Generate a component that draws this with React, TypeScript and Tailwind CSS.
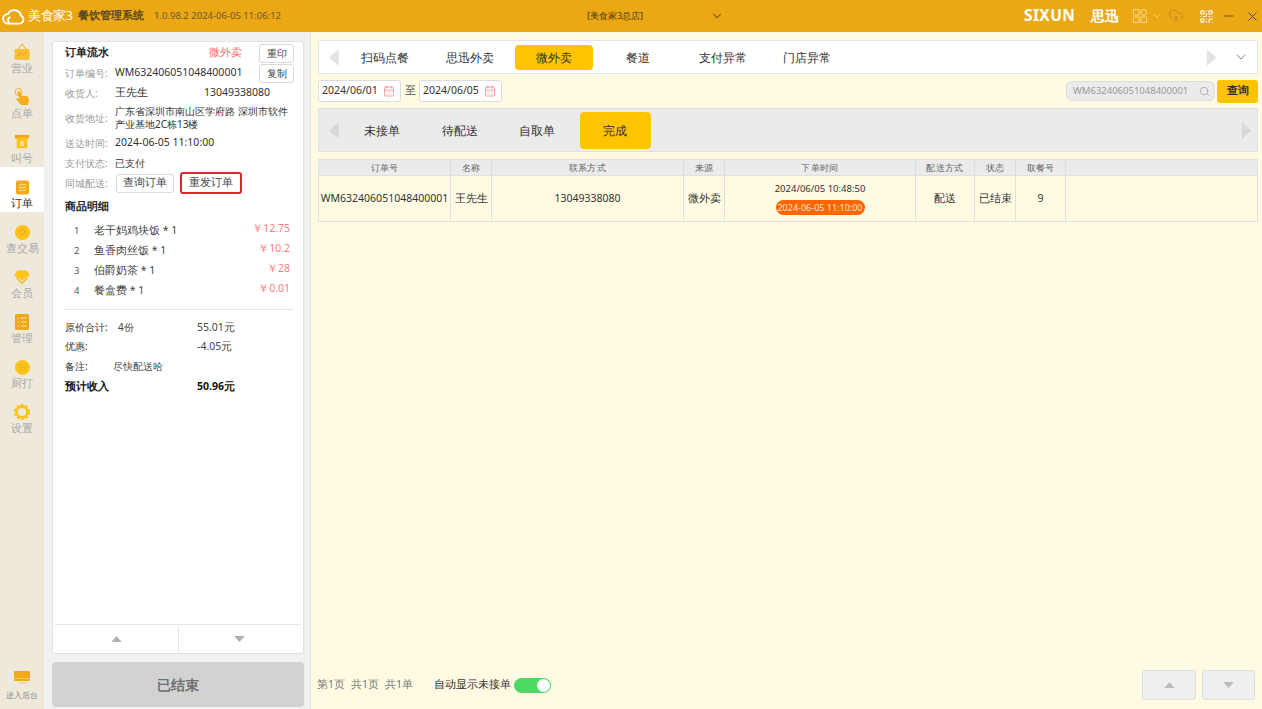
import React from "react";
import { ChevronDown, CloudUpload, QrCode, Minus, X, Search, CalendarDays } from "lucide-react";

const Tri = ({ dir, className }: { dir: "l" | "r" | "u" | "d"; className: string }) => {
  const p = { l: "10,0 10,18 0,9", r: "0,0 0,18 10,9", u: "0,8 14,8 7,0", d: "0,0 14,0 7,8" }[dir];
  const vb = dir === "l" || dir === "r" ? "0 0 10 18" : "0 0 14 8";
  return (
    <svg viewBox={vb} className={className} fill="currentColor">
      <polygon points={p} />
    </svg>
  );
};

const IconYingye = () => (
  <svg viewBox="0 0 16 18" className="w-[16px] h-[18px]">
    <path d="M8 1 L4 6 M8 1 L12 6" stroke="#f0a818" strokeWidth="1" fill="none" />
    <rect x="0.5" y="6" width="15" height="11" rx="1.5" fill="#fbc02d" />
    <path d="M3 13 L6 10 L9 12 L13 9" stroke="#ee9f10" strokeWidth="1" fill="none" />
  </svg>
);
const IconDian = () => (
  <svg viewBox="0 0 16 18" className="w-[16px] h-[18px]">
    <circle cx="4.5" cy="4" r="3.5" fill="none" stroke="#f5b32a" strokeWidth="1" />
    <path d="M3 4 L6 3 L8 8 L13 8 Q15 9 15 12 L14 17 L7 17 L2 11 L4 10 L5.5 11 Z" fill="#f5ad1c" />
  </svg>
);
const IconJiao = () => (
  <svg viewBox="0 0 16 18" className="w-[16px] h-[16px]">
    <rect x="0" y="1" width="16" height="4" fill="#f0a818" />
    <rect x="2" y="4" width="12" height="12" rx="1.5" fill="#fcc419" />
    <text x="8" y="14" textAnchor="middle" fontSize="9" fill="#fff" fontFamily="Liberation Sans, sans-serif">8</text>
  </svg>
);
const IconOrder = () => (
  <svg viewBox="0 0 14 15" className="w-[13px] h-[15px]">
    <rect width="14" height="15" rx="2" fill="#f2a91c" />
    <path d="M3 4.5H11M3 7.5H11M3 10.5H11" stroke="#ffe6a8" strokeWidth="1" />
  </svg>
);
const IconCha = () => (
  <svg viewBox="0 0 16 16" className="w-[15px] h-[15px]">
    <circle cx="8" cy="8" r="8" fill="#fcc419" />
    <circle cx="7.6" cy="7.6" r="3" fill="none" stroke="#f2a91c" strokeWidth="1" />
    <path d="M10 10 L11.5 11.5" stroke="#f2a91c" strokeWidth="1" />
  </svg>
);
const IconHui = () => (
  <svg viewBox="0 0 16 15" className="w-[16px] h-[15px]">
    <path d="M3.5 0.5H12.5L16 5 L8 10.5 L0 5 Z" fill="#fcc419" />
    <path d="M1.5 8 L8 14.5 L14.5 8 L13 7 L8 12 L3 7 Z" fill="#f0c040" />
  </svg>
);
const IconGuan = () => (
  <svg viewBox="0 0 14 16" className="w-[14px] h-[16px]">
    <rect width="14" height="16" rx="1.5" fill="#eda717" />
    <path d="M2.5 4H4M6 4H11.5M2.5 8H4M6 8H11.5M2.5 12H4M6 12H11.5" stroke="#ffe6a8" strokeWidth="1.2" />
  </svg>
);
const IconChu = () => (
  <svg viewBox="0 0 16 16" className="w-[15px] h-[15px]">
    <circle cx="8" cy="8" r="8" fill="#fcc419" />
    <path d="M4 5.5H12M4 8H12M4 10.5H12" stroke="#f2a91c" strokeWidth="0.8" />
  </svg>
);
const IconSet = () => (
  <svg viewBox="0 0 16 16" className="w-[16px] h-[16px]">
    <circle cx="8" cy="8" r="5.4" fill="none" stroke="#fcc419" strokeWidth="2.6" />
    <circle cx="8" cy="8" r="7.2" fill="none" stroke="#fcc419" strokeWidth="1.8" strokeDasharray="2.6 2.05" />
  </svg>
);
const IconDesk = () => (
  <svg viewBox="0 0 16 13" className="w-[16px] h-[13px]">
    <rect width="16" height="10" rx="1" fill="#f2a81c" />
    <rect x="0" y="7" width="16" height="0.8" fill="#ffd780" />
    <rect x="4" y="11" width="8" height="1.4" fill="#f8d078" />
  </svg>
);
const CloudLogo = () => (
  <svg viewBox="0 0 26 18" className="w-[25px] h-[17px]" fill="none" stroke="#fff" strokeWidth="2">
    <path d="M7 16.5 H19.5 A4.5 4.5 0 0 0 21 8 A7.5 7.5 0 0 0 7 6.5 A5 5 0 0 0 7 16.5 M10 16.5 A3.5 3.5 0 0 1 9 10" strokeLinecap="round" />
  </svg>
);

const side = [
  { l: "营业", i: <IconYingye />, h: "h-[18px]" },
  { l: "点单", i: <IconDian />, h: "h-[18px]" },
  { l: "叫号", i: <IconJiao />, h: "h-[18px]" },
  { l: "订单", i: <IconOrder />, h: "h-[18px]", a: true },
  { l: "查交易", i: <IconCha />, h: "h-[18px]" },
  { l: "会员", i: <IconHui />, h: "h-[18px]" },
  { l: "管理", i: <IconGuan />, h: "h-[18px]" },
  { l: "厨打", i: <IconChu />, h: "h-[18px]" },
  { l: "设置", i: <IconSet />, h: "h-[18px]" },
];

const Row = ({ label, children, h = "h-[20px]" }: { label: string; children?: React.ReactNode; h?: string }) => (
  <div className={`flex items-center ${h}`}>
    <span className="w-[50px] shrink-0 text-[10px] text-[#9a9a9a]">{label}</span>
    {children}
  </div>
);

const items = [
  ["1", "老干妈鸡块饭 * 1", "￥12.75"],
  ["2", "鱼香肉丝饭 * 1", "￥10.2"],
  ["3", "伯爵奶茶 * 1", "￥28"],
  ["4", "餐盒费 * 1", "￥0.01"],
];

const cols = [
  { t: "订单号", w: "w-[132px]" },
  { t: "名称", w: "w-[41px]" },
  { t: "联系方式", w: "w-[192px]" },
  { t: "来源", w: "w-[41px]" },
  { t: "下单时间", w: "w-[191px]" },
  { t: "配送方式", w: "w-[59px]" },
  { t: "状态", w: "w-[41px]" },
  { t: "取餐号", w: "w-[50px]" },
  { t: "", w: "flex-1" },
];

const rowVals: React.ReactNode[] = [
  "WM632406051048400001",
  "王先生",
  "13049338080",
  "微外卖",
  <div className="flex flex-col items-center gap-[4px]">
    <span className="text-[9.5px] leading-[14px]">2024/06/05 10:48:50</span>
    <span className="h-[15px] w-[89px] rounded-full bg-[#ff6600] text-[9px] leading-[15px] text-center text-[#ffe3cf]">2024-06-05 11:10:00</span>
  </div>,
  "配送",
  "已结束",
  "9",
  "",
];

export default function App() {
  return (
    <div className="w-[1262px] h-[709px] overflow-hidden flex flex-col font-['Noto_Sans_CJK_SC','Noto_Sans',sans-serif] text-[#333] bg-[#f1f1f1]">
      {/* title bar */}
      <header className="h-[32px] shrink-0 bg-[#eca715] flex items-center">
        <div className="ml-[1px] w-[27px] flex"><CloudLogo /></div>
        <span className="w-[50px] text-[13px] text-[#fff] tracking-[-0.5px]">美食家3</span>
        <span className="w-[76px] text-[10.5px] font-bold text-[#5a4a20]">餐饮管理系统</span>
        <span className="text-[9.5px] text-[#6b5a2a] w-[433px]">1.0.98.2 2024-06-05 11:06:12</span>
        <span className="text-[9px] text-[#4a3a10] w-[123px]">[美食家3总店]</span>
        <ChevronDown className="w-[14px] h-[14px] text-[#8a6a10]" />
        <span className="ml-[300px] w-[65px] text-[15.5px] font-bold text-white font-['Liberation_Sans',sans-serif] tracking-[0.4px] leading-none">SIXUN</span>
        <span className="ml-[2px] w-[42px] text-[14px] text-white font-bold leading-none">思迅</span>
        <svg viewBox="0 0 14 14" className="w-[14px] h-[14px]" fill="none" stroke="#f7d78a" strokeWidth="1">
          <rect x="0.5" y="0.5" width="5.5" height="5.5" />
          <rect x="0.5" y="8" width="5.5" height="5.5" />
          <rect x="8" y="8" width="5.5" height="5.5" />
          <rect x="8.2" y="0.8" width="5" height="5" transform="rotate(45 10.7 3.3)" />
        </svg>
        <ChevronDown className="ml-[5px] w-[10px] h-[10px] text-[#f7d78a]" />
        <CloudUpload className="ml-[6px] w-[16px] h-[16px] text-[#b9892a]" strokeWidth={1.4} />
        <QrCode className="ml-[15px] w-[15px] h-[15px] text-white" strokeWidth={1.8} />
        <Minus className="ml-[8px] w-[14px] h-[14px] text-[#5a4a20]" strokeWidth={1.6} />
        <X className="ml-[9px] w-[15px] h-[15px] text-[#5a4a20]" strokeWidth={1.6} />
      </header>

      <div className="flex-1 flex min-h-0">
        {/* sidebar */}
        <aside className="w-[44px] shrink-0 bg-[#efe9dc] flex flex-col">
          {side.map((s) => (
            <div key={s.l} className={`h-[45px] pt-[11px] flex flex-col items-center ${s.a ? "bg-white" : ""}`}>
              <div className="h-[18px] flex items-center justify-center">{s.i}</div>
              <span className={`text-[11px] leading-[14px] whitespace-nowrap ${s.a ? "text-[#333]" : "text-[#a8a8a8]"}`}>{s.l}</span>
            </div>
          ))}
          <div className="mt-auto h-[38px] flex flex-col items-center">
            <IconDesk />
            <span className="mt-[5px] text-[8px] leading-[12px] text-[#888] whitespace-nowrap">进入后台</span>
          </div>
        </aside>

        {/* order detail */}
        <section className="w-[267px] shrink-0 px-[8px] pt-[9px] pb-[2px] flex flex-col border-r border-[#e4e4e4]">
          <div className="w-[252px] h-[613px] bg-white rounded-[3px] border border-[#e2e2e2] flex flex-col">
            <div className="flex-1 pl-[12px] pr-[9px] pt-[1px]">
              <div className="flex items-center h-[20px]">
                <span className="w-[144px] text-[10.5px] font-bold text-[#222]">订单流水</span>
                <span className="w-[50px] text-[10.5px] text-[#f96a6a]">微外卖</span>
                <button className="w-[35px] h-[19px] border border-[#d9d9d9] rounded-[3px] text-[10px] text-[#444]">重印</button>
              </div>
              <div className="flex items-center h-[20px]">
                <span className="w-[50px] shrink-0 text-[10px] text-[#9a9a9a]">订单编号:</span>
                <span className="w-[144px] text-[10.5px]">WM632406051048400001</span>
                <button className="w-[35px] h-[19px] border border-[#d9d9d9] rounded-[3px] text-[10px] text-[#444]">复制</button>
              </div>
              <Row label="收货人:">
                <span className="w-[89px] text-[10.5px]">王先生</span>
                <span className="text-[10.5px]">13049338080</span>
              </Row>
              <Row label="收货地址:" h="h-[30px]">
                <span className="w-[176px] text-[10px] leading-[13px]">广东省深圳市南山区学府路 深圳市软件产业基地2C栋13楼</span>
              </Row>
              <Row label="送达时间:"><span className="text-[10.5px]">2024-06-05 11:10:00</span></Row>
              <Row label="支付状态:"><span className="text-[10px]">已支付</span></Row>
              <Row label="同城配送:">
                <button className="ml-[1px] w-[58px] h-[19px] border border-[#d9d9d9] rounded-[3px] text-[10.5px] text-[#444]">查询订单</button>
                <button className="ml-[6px] w-[62px] h-[22px] border-2 border-[#e5222a] rounded-[3px] text-[10.5px] text-[#444]">重发订单</button>
              </Row>
              <div className="h-[28px] flex items-center text-[10.5px] font-bold text-[#222]">商品明细</div>
              <ul>
                {items.map(([n, name, p]) => (
                  <li key={n} className="h-[20px] flex items-center">
                    <span className="w-[29px] pl-[9px] text-[9.5px] text-[#555]">{n}</span>
                    <span className="flex-1 text-[10.5px] text-[#444]">{name}</span>
                    <span className="mr-[4px] -translate-y-[2px] text-[10.5px] text-[#fb8080]">{p}</span>
                  </li>
                ))}
              </ul>
              <div className="-ml-[2px] mt-[8px] mb-[8px] h-px bg-[#e6e6e6]" />
              <div className="h-[19px] flex items-center text-[10px] text-[#444]">
                <span className="w-[53px] text-[#333]">原价合计:</span>
                <span className="w-[79px]">4份</span>
                <span className="text-[10.5px]">55.01元</span>
              </div>
              <div className="h-[19px] flex items-center text-[10px] text-[#444]">
                <span className="w-[132px] text-[#333]">优惠:</span>
                <span className="text-[10.5px]">-4.05元</span>
              </div>
              <div className="h-[21px] flex items-center text-[10px] text-[#444]">
                <span className="w-[48px] text-[#333]">备注:</span>
                <span>尽快配送哈</span>
              </div>
              <div className="h-[19px] flex items-center text-[10.5px] font-bold text-[#111]">
                <span className="w-[132px]">预计收入</span>
                <span>50.96元</span>
              </div>
            </div>
            <div className="mx-[2px] h-[29px] border-t border-[#e6e6e6] flex items-center">
              <div className="flex-1 flex justify-center"><Tri dir="u" className="w-[11px] h-[6px] text-[#b0b0b0]" /></div>
              <div className="w-px h-[26px] bg-[#e6e6e6]" />
              <div className="flex-1 flex justify-center"><Tri dir="d" className="w-[11px] h-[6px] text-[#b0b0b0]" /></div>
            </div>
          </div>
          <button className="mt-[8px] w-[252px] h-[45px] rounded-[4px] bg-[#d2d2d2] text-[14px] font-bold text-[#6f6f6f]">已结束</button>
        </section>

        {/* main */}
        <main className="flex-1 min-w-0 bg-[#fffbe3] pl-[7px] pr-[4px] pt-[8px] flex flex-col">
          <div className="h-[34px] shrink-0 bg-white border border-[#e4e4e0] rounded-[2px] flex items-center text-[12px] text-[#333]">
            <Tri dir="l" className="ml-[10px] w-[10px] h-[17px] text-[#e3e3e3]" />
            <div className="ml-[4px] flex">
              {["扫码点餐", "思迅外卖", "微外卖", "餐道", "支付异常", "门店异常"].map((t) => (
                <div key={t} className="w-[84.4px] flex justify-center">
                  <span className={t === "微外卖" ? "w-[78px] h-[25px] leading-[25px] text-center rounded-[4px] bg-[#ffc300]" : "h-[25px] leading-[25px]"}>{t}</span>
                </div>
              ))}
            </div>
            <Tri dir="r" className="ml-auto w-[11px] h-[17px] text-[#e3e3e3]" />
            <ChevronDown className="ml-[16px] mr-[8px] w-[16px] h-[16px] text-[#777]" strokeWidth={1.4} />
          </div>

          <div className="h-[34px] shrink-0 flex items-center">
            <div className="w-[83px] h-[22px] bg-white border border-[#dcdcdc] rounded-[3px] flex items-center pl-[3px] text-[10.5px]">
              2024/06/01
              <CalendarDays className="ml-auto mr-[5px] w-[12px] h-[12px] text-[#f58b8b]" strokeWidth={1.6} />
            </div>
            <span className="w-[18px] text-center text-[10.5px] text-[#555]">至</span>
            <div className="w-[83px] h-[22px] bg-white border border-[#dcdcdc] rounded-[3px] flex items-center pl-[3px] text-[10.5px]">
              2024/06/05
              <CalendarDays className="ml-auto mr-[5px] w-[12px] h-[12px] text-[#f58b8b]" strokeWidth={1.6} />
            </div>
            <div className="ml-auto w-[149px] h-[20px] rounded-[6px] bg-[#ebebeb] border border-[#dddddd] flex items-center pl-[6px] text-[9.5px] text-[#999]">
              WM632406051048400001
              <Search className="ml-auto mr-[4px] w-[11px] h-[11px] text-[#aaa]" />
            </div>
            <button className="ml-[2px] w-[41px] h-[23px] rounded-[3px] bg-[#ffc300] text-[10.5px] font-bold text-[#333]">查询</button>
          </div>

          <div className="h-[44px] shrink-0 bg-[#ebebeb] border border-[#e0e0e0] flex items-center text-[12px] text-[#333]">
            <Tri dir="l" className="ml-[10px] w-[10px] h-[17px] text-[#d8d8d8]" />
            <div className="ml-[4px] flex">
              {["未接单", "待配送", "自取单", "完成"].map((t) => (
                <div key={t} className="w-[77.8px] flex justify-center">
                  <span className={t === "完成" ? "w-[71px] h-[37px] leading-[37px] text-center rounded-[4px] bg-[#ffc300] shrink-0" : "h-[37px] leading-[37px]"}>{t}</span>
                </div>
              ))}
            </div>
            <Tri dir="r" className="ml-auto mr-[5px] w-[11px] h-[17px] text-[#d8d8d8]" />
          </div>

          <div className="mt-[7px] shrink-0 border border-[#e0e0e0]">
            <div className="flex h-[16px] bg-[#ebebeb] border-b border-[#e0e0e0]">
              {cols.map((c, i) => (
                <div key={i} className={`${c.w} shrink-0 ${i === 8 ? "shrink" : ""} border-r border-[#dcdcdc] last:border-r-0 text-center text-[9px] leading-[15px] tracking-[0.3px] text-[#666]`}>{c.t}</div>
              ))}
            </div>
            <div className="flex h-[45px]">
              {cols.map((c, i) => (
                <div key={i} className={`${c.w} shrink-0 ${i === 8 ? "shrink" : ""} border-r border-[#e0e0e0] last:border-r-0 flex items-center justify-center whitespace-nowrap text-[10.5px] text-[#333]`}>{rowVals[i]}</div>
              ))}
            </div>
          </div>

          <div className="mt-auto mb-[9px] h-[30px] shrink-0 flex items-center text-[10.5px]">
            <span className="-ml-[1px] text-[#777]">第1页</span>
            <span className="ml-[6px] text-[#777]">共1页</span>
            <span className="ml-[6px] text-[#777]">共1单</span>
            <span className="ml-[21px] text-[#333]">自动显示未接单</span>
            <span className="ml-[3px] w-[37px] h-[15px] rounded-full bg-[#4cd964] flex items-center justify-end pr-[1px]">
              <span className="w-[13px] h-[13px] rounded-full bg-white" />
            </span>
            <button className="ml-auto w-[54px] h-[30px] rounded-[3px] bg-[#efefef] border border-[#dedede] flex items-center justify-center">
              <Tri dir="u" className="w-[11px] h-[6px] text-[#bdbdbd]" />
            </button>
            <button className="ml-[6px] mr-[3px] w-[53px] h-[30px] rounded-[3px] bg-[#efefef] border border-[#dedede] flex items-center justify-center">
              <Tri dir="d" className="w-[11px] h-[6px] text-[#bdbdbd]" />
            </button>
          </div>
        </main>
      </div>
    </div>
  );
}
